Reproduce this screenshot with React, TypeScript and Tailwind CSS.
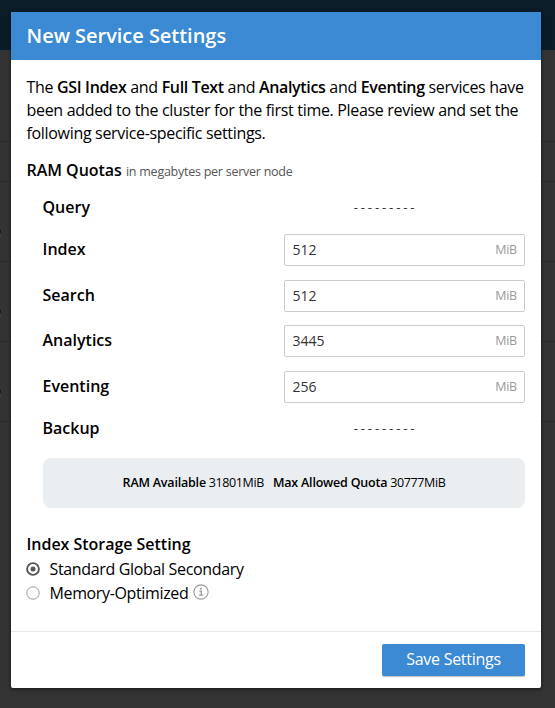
import React from "react";

const services: { name: string; value?: string; height: string }[] = [
  { name: "Query", height: "h-[39px]" },
  { name: "Index", value: "512", height: "h-[46px]" },
  { name: "Search", value: "512", height: "h-[45px]" },
  { name: "Analytics", value: "3445", height: "h-[46px]" },
  { name: "Eventing", value: "256", height: "h-[45px]" },
  { name: "Backup", height: "h-[39px]" },
];

function Backdrop() {
  return (
    <div className="absolute inset-0 overflow-hidden bg-[#333333]">
      <div className="h-[50px] bg-[#0b1c29]" />
      <div className="h-[92px] border-b border-[#2a2a2a]" />
      <div className="h-10 border-b border-[#2a2a2a]" />
      {[0, 1, 2].map((i) => (
        <div key={i} className="h-20 border-b border-[#2a2a2a] pt-[48px]">
          <div className="h-[3px] w-px bg-[#38081c]" />
          <div className="mt-[2px] h-[2px] w-px bg-[#444444]" />
        </div>
      ))}
    </div>
  );
}

function Strong({ children }: { children: React.ReactNode }) {
  return <b className="font-semibold tracking-[-0.34px]">{children}</b>;
}

function QuotaRow({ name, value, height }: { name: string; value?: string; height: string }) {
  return (
    <div className={`flex items-start justify-between ${height}`}>
      <div className={`text-[16px] font-semibold leading-[24px] ${value ? "pt-[3px]" : ""}`}>{name}</div>
      {value ? (
        <div className="flex h-8 w-[241px] items-center justify-between rounded-[2px] border border-[#cccccc] pl-[7.5px] pr-[7px]">
          <span className="text-[14px] leading-5 text-[#333333]">{value}</span>
          <span className="text-[12.5px] leading-5 tracking-[-0.2px] text-[#999999]">MiB</span>
        </div>
      ) : (
        <div className="w-[241px] pr-[41px] text-center text-[13px] leading-[24px] tracking-[-0.24px] text-[#333333]">
          - - - - - - - - -
        </div>
      )}
    </div>
  );
}

export default function App() {
  return (
    <div className="relative h-[708px] w-[555px] overflow-hidden font-['Open_Sans','Noto_Sans',sans-serif] text-black">
      <Backdrop />
      <div className="relative ml-[11px] mt-3 flex h-[676px] w-[530px] flex-col overflow-hidden rounded-[2px] bg-white shadow-[0_1px_3px_1px_rgba(0,0,0,0.35)]">
        <header className="flex h-12 shrink-0 items-center bg-[#3b8ad3] pl-[15.5px] text-[20px] font-semibold tracking-[-0.03px] text-white">
          New Service Settings
        </header>
        <main className="flex h-[572px] shrink-0 flex-col border-b border-[#e6e6e6] pl-[15.5px] pr-4 pt-4">
          <p className="whitespace-nowrap text-[16px] leading-[23px] tracking-[-0.32px]">
            The <Strong>GSI Index</Strong> and <Strong>Full Text</Strong> and <Strong>Analytics</Strong> and{" "}
            <Strong>Eventing</Strong> services have
            <br />
            been added to the cluster for the first time. Please review and set the
            <br />
            following service-specific settings.
          </p>
          <h2 className="mt-[13px] text-[16px] font-semibold leading-6 tracking-[-0.03px]">
            RAM Quotas{" "}
            <span className="text-[12.5px] font-normal tracking-[-0.25px] text-[#555555]">
              in megabytes per server node
            </span>
          </h2>
          <div className="mt-[11px] pl-4">
            {services.map((s) => (
              <QuotaRow key={s.name} {...s} />
            ))}
          </div>
          <div className="ml-[16.5px] mt-[3px] flex h-[50px] items-center justify-center gap-[9px] rounded-lg bg-[#eaeef1] text-[12.5px] tracking-[-0.38px]">
            <span>
              <b className="font-semibold tracking-[-0.2px]">RAM Available</b> 31801MiB
            </span>
            <span>
              <b className="font-semibold tracking-[-0.2px]">Max Allowed Quota</b> 30777MiB
            </span>
          </div>
          <h2 className="mt-6 text-[16px] font-semibold leading-6 tracking-[-0.03px]">Index Storage Setting</h2>
          <div className="flex h-[25px] items-center text-[16px] tracking-[-0.34px]">
            <svg className="-ml-[0.5px] mr-[9.5px]" width="14" height="14" viewBox="0 0 14 14" fill="none">
              <circle cx="7" cy="7" r="5.9" stroke="#555" strokeWidth="1.9" />
              <circle cx="7" cy="7" r="2.5" fill="#555" />
            </svg>
            Standard Global Secondary
          </div>
          <div className="flex h-6 items-center text-[16px] tracking-[-0.36px]">
            <svg className="-ml-[0.5px] mr-[9.5px]" width="14" height="14" viewBox="0 0 14 14" fill="none">
              <circle cx="7" cy="7" r="6.2" stroke="#999" strokeWidth="1" />
            </svg>
            Memory-Optimized
            <svg className="mb-[3px] ml-[4.5px]" width="16" height="16" viewBox="0 0 16 16" fill="none" stroke="#999">
              <circle cx="8" cy="8" r="7.1" strokeWidth="1.1" />
              <circle cx="8" cy="4.8" r="1" fill="#999" stroke="none" />
              <path d="M6.4 7.2H8.3V11M6.1 11.2H10" strokeWidth="1.3" />
            </svg>
          </div>
        </main>
        <footer className="flex h-14 shrink-0 items-center justify-end pr-4">
          <button className="h-8 w-[143px] rounded-[2px] bg-[#3b8ad3] pb-[2px] text-[16px] tracking-[-0.28px] text-white shadow-[0_1px_1px_rgba(0,0,0,0.25)]">
            Save Settings
          </button>
        </footer>
      </div>
    </div>
  );
}
